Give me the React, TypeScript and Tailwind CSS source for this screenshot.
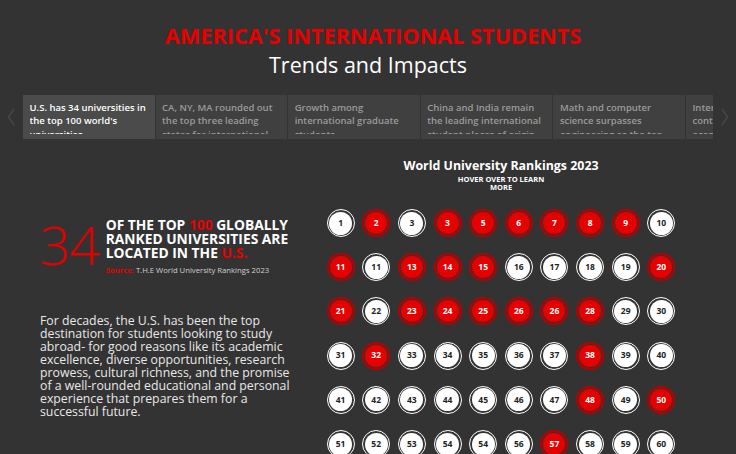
import React from "react";

const tabs = [
  "U.S. has 34 universities in the top 100 world's universities",
  "CA, NY, MA rounded out the top three leading states for international students",
  "Growth among international graduate students",
  "China and India remain the leading international student places of origin",
  "Math and computer science surpasses engineering as the top field",
  "International contribution to the economy",
];

type Cell = { n: number; red: boolean };

const rows: [number[], number[]][] = [
  [[1, 2, 3, 3, 5, 6, 7, 8, 9, 10], [0, 1, 0, 1, 1, 1, 1, 1, 1, 0]],
  [[11, 11, 13, 14, 15, 16, 17, 18, 19, 20], [1, 0, 1, 1, 1, 0, 0, 0, 0, 1]],
  [[21, 22, 23, 24, 25, 26, 26, 28, 29, 30], [1, 0, 1, 1, 1, 1, 1, 1, 0, 0]],
  [[31, 32, 33, 34, 35, 36, 37, 38, 39, 40], [0, 1, 0, 0, 0, 0, 0, 1, 0, 0]],
  [[41, 42, 43, 44, 45, 46, 47, 48, 49, 50], [0, 0, 0, 0, 0, 0, 0, 1, 0, 1]],
  [[51, 52, 53, 54, 54, 56, 57, 58, 59, 60], [0, 0, 0, 0, 0, 0, 1, 0, 0, 0]],
];

const cells: Cell[] = rows.flatMap(([nums, reds]) =>
  nums.map((n, i) => ({ n, red: reds[i] === 1 }))
);

function Circle({ n, red }: Cell) {
  if (red) {
    return (
      <div className="w-[28px] h-[28px] rounded-full border-2 border-[#b80000] p-[1px]">
        <div className="w-full h-full rounded-full bg-[#e60000] flex items-center justify-center text-white text-[8.5px] font-bold leading-none">
          {n}
        </div>
      </div>
    );
  }
  return (
    <div className="w-[28px] h-[28px] rounded-full border-[1.5px] border-white p-[1.5px]">
      <div className="w-full h-full rounded-full bg-white flex items-center justify-center text-[#222] text-[8.5px] font-bold leading-none">
        {n}
      </div>
    </div>
  );
}

export default function App() {
  return (
    <div className="w-[736px] h-[454px] overflow-hidden bg-[#333333] font-['Open_Sans',sans-serif]">
      <header className="pt-[24px] text-center">
        <h1 className="pl-[10px] text-[21.7px] leading-[24px] font-bold text-[#e60000]">
          AMERICA'S INTERNATIONAL STUDENTS
        </h1>
        <h2 className="mt-[4px] text-[21.5px] leading-[26px] text-white">Trends and Impacts</h2>
      </header>

      <div className="mt-[17px] flex h-[44px] items-stretch">
        <div className="w-[23px] flex items-center justify-center">
          <svg width="9" height="18" viewBox="0 0 9 18" fill="none">
            <polyline points="7,1 1.5,9 7,17" stroke="#474747" strokeWidth="1.5" />
          </svg>
        </div>
        <div className="w-[690px] overflow-hidden flex gap-[1px]">
          {tabs.map((t, i) => (
            <div
              key={i}
              className={`w-[131.6px] shrink-0 px-[6.5px] pt-[6px] ${
                i === 0 ? "bg-[#4b4b4b] text-white" : "bg-[#404040] text-[#9b9b9b]"
              }`}
            >
              <div className="h-[32.5px] overflow-hidden text-[9.5px] leading-[13.3px] font-semibold">
                {t}
              </div>
            </div>
          ))}
        </div>
        <div className="w-[23px] flex items-center justify-center">
          <svg width="9" height="18" viewBox="0 0 9 18" fill="none">
            <polyline points="2,1 7.5,9 2,17" stroke="#474747" strokeWidth="1.5" />
          </svg>
        </div>
      </div>

      <main className="flex pl-[40px] pt-[18px] gap-[20px]">
        <section className="w-[262px] pt-[61px]">
          <div className="flex items-start gap-[6px]">
            <div className="text-[54px] leading-none font-light text-[#e60000] -mt-[1px] tracking-[-1px]">
              34
            </div>
            <div>
              <div className="text-[13.8px] leading-[14px] font-bold text-white">
                OF THE TOP <span className="text-[#e60000]">100</span> GLOBALLY
                <br />
                RANKED UNIVERSITIES ARE
                <br />
                LOCATED IN THE <span className="text-[#e60000]">U.S.</span>
              </div>
              <div className="mt-[5px] text-[7.7px] leading-[10px] text-[#d0d0d0]">
                <span className="font-bold text-[#e60000]">Source:</span> T.H.E World University Rankings 2023
              </div>
            </div>
          </div>
          <p className="mt-[39px] w-[262px] text-[12.3px] leading-[13px] text-[#e8e8e8]">
            For decades, the U.S. has been the top destination for students looking to study abroad- for good
            reasons like its academic excellence, diverse opportunities, research prowess, cultural richness, and
            the promise of a well-rounded educational and personal experience that prepares them for a successful
            future.
          </p>
        </section>

        <section className="w-[362px] -ml-[2px]">
          <h3 className="text-center text-[12.4px] leading-[18px] font-bold text-white">
            World University Rankings 2023
          </h3>
          <div className="text-center text-[7.5px] leading-[8px] font-bold text-white">
            HOVER OVER TO LEARN
            <br />
            MORE
          </div>
          <div className="mt-[10px] w-[356.4px] mx-auto grid grid-cols-10">
            {cells.map((c, i) => (
              <div key={i} className="h-[44.2px] flex items-center justify-center">
                <Circle {...c} />
              </div>
            ))}
          </div>
        </section>
      </main>
    </div>
  );
}
